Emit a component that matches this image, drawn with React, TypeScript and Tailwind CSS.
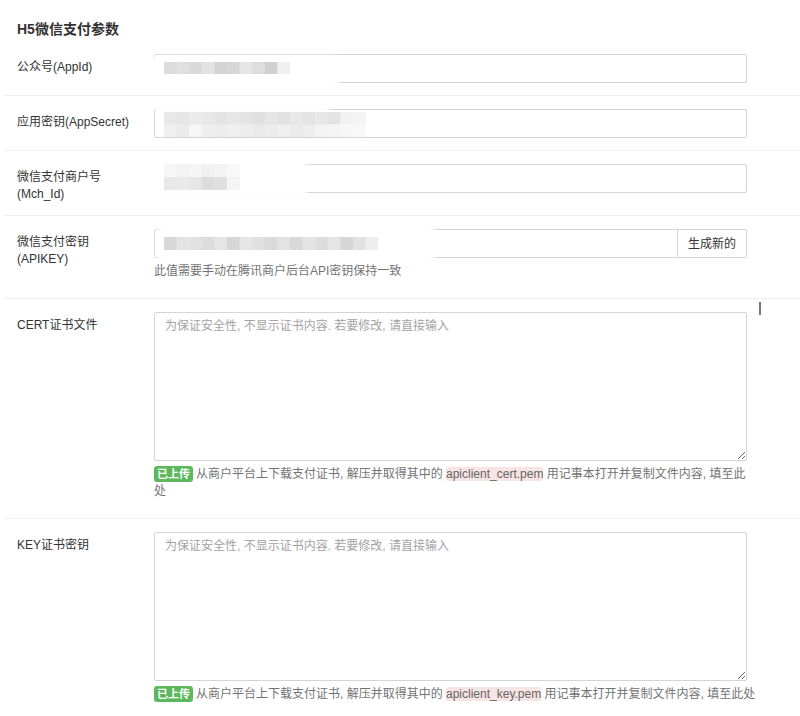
import React from "react";

// grey pixel blocks standing in for the blurred secret values
const Mosaic = ({ rows, cell, h, className }: { rows: string[][]; cell: number; h: number; className: string }) => {
  const w = Math.max(...rows.map((r) => r.length)) * cell;
  return (
    <svg className={className} width={w} height={h * rows.length} viewBox={`0 0 ${w} ${h * rows.length}`}>
      {rows.map((r, ri) =>
        r.map((c, ci) => <rect key={`${ri}-${ci}`} x={ci * cell} y={ri * h} width={cell + 0.5} height={h + 0.5} fill={c} />)
      )}
    </svg>
  );
};

const Row = ({ label, children, extra }: { label: React.ReactNode; children: React.ReactNode; extra?: React.ReactNode }) => (
  <div className="relative flex border-b border-[#f0f0f0] pt-[13px] pb-[12px]">
    <label className="w-[150px] shrink-0 pl-[13px] pr-[20px] pt-[5px] leading-[17px] text-[#333]">{label}</label>
    <div className="w-[593px]">{children}</div>
    {extra}
  </div>
);

const inputCls = "block h-[29px] w-full rounded-[2px] border border-[#d4d4d4] bg-white px-[10px] outline-none";

const Help = ({ children }: { children: React.ReactNode }) => (
  <p className="mt-[5px] mb-[6px] mr-[-9px] leading-[17px] text-[#737373]">{children}</p>
);

const Badge = () => (
  <span className="mr-[3px] inline-block rounded-[3px] bg-[#5cb85c] px-[3px] text-[11px] font-bold leading-[16px] text-white">
    已上传
  </span>
);

const Code = ({ children }: { children: React.ReactNode }) => (
  <span className="rounded-[2px] bg-[#f7e4e4] text-[#666]">{children}</span>
);

const placeholder = "为保证安全性, 不显示证书内容. 若要修改, 请直接输入";

export default function App() {
  return (
    <div className="min-h-screen bg-white text-[12px] text-[#333] font-['Liberation_Sans','Noto_Sans_CJK_SC',sans-serif]">
      <div className="h-[41px] pl-[17px] pt-[19px] text-[14px] font-bold leading-[20px] text-[#333]">H5微信支付参数</div>
      <div className="ml-[4px]">
        <Row label="公众号(AppId)">
          <div className="relative">
            <input className={inputCls} readOnly />
            <div className="absolute left-[-4px] top-[2px] h-[30px] w-[190px] rounded-[6px] bg-white blur-[2px]" />
            <Mosaic
              className="absolute left-[10px] top-[8px]"
              cell={12.6}
              h={12}
              rows={[["#dcdcdc", "#e0e0e0", "#d9d9d9", "#e3e3e3", "#d4d4d4", "#d6d6d6", "#e6e6e6", "#dedede", "#d0d0d0", "#f0f0f0"]]}
            />
          </div>
        </Row>
        <Row label="应用密钥(AppSecret)">
          <div className="relative">
            <input className={inputCls} readOnly />
            <div className="absolute left-[1px] top-[-3px] h-[7px] w-[175px] rounded-[4px] bg-white blur-[2px]" />
            <Mosaic
              className="absolute left-[10px] top-[3px]"
              cell={12.6}
              h={12.5}
              rows={[
                ["#e8e8e8", "#e6e6e6", "#ebebeb", "#e8e8e8", "#e4e4e4", "#e7e7e7", "#e4e4e4", "#e0e0e0", "#e6e6e6", "#e2e2e2", "#e8e8e8", "#e4e4e4", "#e8e8e8", "#e3e3e3", "#f2f2f2", "#f4f4f4"],
                ["#f0f0f0", "#ebebeb", "#f6f6f6", "#eeeeee", "#ececec", "#efefef", "#ededed", "#eaeaea", "#ececec", "#efefef", "#ebebeb", "#eeeeee", "#f3f3f3", "#f5f5f5", "#f7f7f7", "#f8f8f8"],
              ]}
            />
          </div>
        </Row>
        <Row label="微信支付商户号(Mch_Id)">
          <div className="relative">
            <input className={inputCls} readOnly />
            <div className="absolute left-[-4px] top-[-4px] h-[36px] w-[158px] rounded-[6px] bg-white blur-[2px]" />
            <Mosaic
              className="absolute left-[10px] top-[0px]"
              cell={12.6}
              h={13}
              rows={[
                ["#f6f6f6", "#f3f3f3", "#f5f5f5", "#f1f1f1", "#f4f4f4", "#f8f8f8"],
                ["#e8e8e8", "#eaeaea", "#e6e6e6", "#dcdcdc", "#e0e0e0", "#f4f4f4"],
              ]}
            />
          </div>
        </Row>
        <Row label="微信支付密钥(APIKEY)">
          <div className="relative flex">
            <input className={inputCls + " rounded-r-none"} readOnly />
            <button className="h-[29px] w-[69px] shrink-0 rounded-r-[2px] border border-l-0 border-[#d4d4d4] bg-white text-[12px] text-[#333]">
              生成新的
            </button>
            <div className="absolute left-[2px] top-[-3px] h-[35px] w-[280px] rounded-[8px] bg-white blur-[2px]" />
            <Mosaic
              className="absolute left-[10px] top-[8px]"
              cell={12.6}
              h={13}
              rows={[["#d8d8d8", "#e4e4e4", "#e2e2e2", "#dcdcdc", "#e5e5e5", "#d6d6d6", "#e6e6e6", "#e0e0e0", "#dadada", "#e3e3e3", "#d9d9d9", "#e4e4e4", "#dddddd", "#e5e5e5", "#d6d6d6", "#e2e2e2", "#eeeeee"]]}
            />
          </div>
          <Help>此值需要手动在腾讯商户后台API密钥保持一致</Help>
        </Row>
        <Row
          label="CERT证书文件"
          extra={<div className="absolute left-[755px] top-[3px] h-[13px] w-[2px] bg-[#777]" />}
        >
          <textarea
            className="block h-[149px] w-full rounded-[2px] border border-[#d4d4d4] px-[10px] pt-[5px] leading-[17px] outline-none placeholder:text-[#a3a3a3]"
            placeholder={placeholder}
          />
          <Help>
            <Badge />
            从商户平台上下载支付证书, 解压并取得其中的 <Code>apiclient_cert.pem</Code> 用记事本打开并复制文件内容, 填至此处
          </Help>
        </Row>
        <Row label="KEY证书密钥">
          <textarea
            className="block h-[149px] w-full rounded-[2px] border border-[#d4d4d4] px-[10px] pt-[5px] leading-[17px] outline-none placeholder:text-[#a3a3a3]"
            placeholder={placeholder}
          />
          <Help>
            <Badge />
            从商户平台上下载支付证书, 解压并取得其中的 <Code>apiclient_key.pem</Code> 用记事本打开并复制文件内容, 填至此处
          </Help>
        </Row>
      </div>
    </div>
  );
}
